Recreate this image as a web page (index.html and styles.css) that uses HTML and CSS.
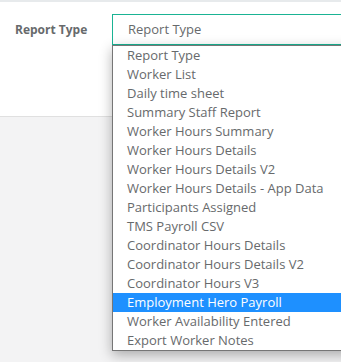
FILE: index.html
```html
<!DOCTYPE html>
<html lang="en">
<head>
    <meta charset="utf-8" />
    <title>Report Type</title>
    <link rel="stylesheet" href="styles.css">
</head>
<body>
    <div class="page">
        <div class="topbar"></div>
        <div class="panel">
            <div class="form-row">
                <label class="form-label">Report Type</label>
                <div class="select-wrap">
                    <div class="select-box">Report Type</div>
                    <ul class="options">
                        <li>Report Type</li>
                        <li>Worker List</li>
                        <li>Daily time sheet</li>
                        <li>Summary Staff Report</li>
                        <li>Worker Hours Summary</li>
                        <li>Worker Hours Details</li>
                        <li>Worker Hours Details V2</li>
                        <li>Worker Hours Details - App Data</li>
                        <li>Participants Assigned</li>
                        <li>TMS Payroll CSV</li>
                        <li>Coordinator Hours Details</li>
                        <li>Coordinator Hours Details V2</li>
                        <li>Coordinator Hours V3</li>
                        <li class="selected">Employment Hero Payroll</li>
                        <li>Worker Availability Entered</li>
                        <li>Export Worker Notes</li>
                    </ul>
                </div>
            </div>
        </div>
    </div>
</body>
</html>
```

FILE: styles.css
```css
/* page base */
body {
    margin: 0;
    background-color: #f3f3f4;
    font-family: "Open Sans", Arial, sans-serif;
    font-size: 13px;
    color: #676a6c;
}

.page {
    position: relative;
    height: 362px;
    overflow: hidden;
}

.topbar {
    height: 2px;
    background-color: #e7eaec;
}

.panel {
    background-color: #ffffff;
    height: 114px;
    border-bottom: 1px solid #e0e0e0;
}

.form-row {
    display: flex;
    align-items: flex-start;
    padding-top: 12px;
}

.form-label {
    width: 97px;
    padding-left: 15px;
    line-height: 32px;
    font-size: 12px;
    font-weight: bold;
}

.select-wrap {
    position: relative;
    flex: 1;
}

.select-box {
    height: 29px;
    line-height: 29px;
    padding-left: 15px;
    border: 1px solid #1ab394;
    border-right: none;
    color: #676a6c;
}

/* open dropdown list lies over the page */
.options {
    position: absolute;
    top: 31px;
    left: 0;
    width: 240px;
    margin: 0;
    padding: 0;
    list-style: none;
    background-color: #ffffff;
    border: 1px solid #767676;
    box-shadow: 0 4px 12px rgba(0, 0, 0, 0.3);
    z-index: 2;
}

.options li {
    height: 19px;
    line-height: 19px;
    padding-left: 14px;
    white-space: nowrap;
}

.options li.selected {
    background-color: #1e90ff;
    color: #ffffff;
}
```
